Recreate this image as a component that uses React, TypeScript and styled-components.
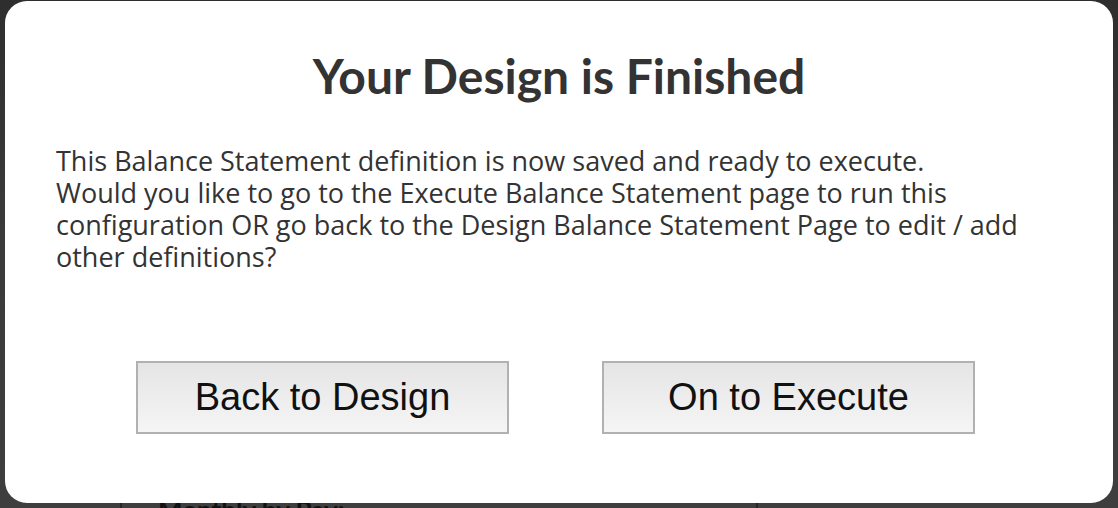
import React from "react";
import styled, { createGlobalStyle } from "styled-components";

const GlobalStyle = createGlobalStyle`
  html, body {
    margin: 0;
    padding: 0;
    width: 1118px;
    height: 508px;
    overflow: hidden;
    background: #3b3b3b;
  }
  * {
    box-sizing: border-box;
  }
`;

const Page = styled.div`
  position: relative;
  width: 1118px;
  height: 508px;
  background: linear-gradient(180deg, #2e2e2e 0%, #393939 40%, #3e3e3e 100%);
  overflow: hidden;
`;

const BehindRow = styled.div`
  display: flex;
  padding-top: 494px;
`;

const BehindCell = styled.div<{ $width: number }>`
  width: ${(p) => p.$width}px;
  height: 40px;
  padding-left: ${(p) => (p.$width > 400 ? 36 : 0)}px;
  border-right: 2px solid #262626;
  font-family: "Lato", "Liberation Sans", sans-serif;
  font-weight: 700;
  font-size: 26px;
  color: #111;
`;

const Modal = styled.div`
  position: absolute;
  top: 1px;
  left: 5px;
  width: 1108px;
  height: 502px;
  background: #fff;
  border-radius: 22px;
  display: flex;
  flex-direction: column;
  padding: 48px 51px 0;
`;

const Title = styled.h1`
  margin: 0;
  text-align: center;
  font-family: "Lato", "Liberation Sans", sans-serif;
  font-weight: 700;
  font-size: 48px;
  line-height: 54px;
  color: #333;
`;

const Message = styled.p`
  margin: 42px 0 0;
  font-family: "Open Sans", "Liberation Sans", sans-serif;
  font-size: 27px;
  line-height: 32px;
  color: #333;
`;

const Actions = styled.div`
  display: flex;
  justify-content: center;
  gap: 93px;
  margin-top: 88px;
  padding-right: 7px;
`;

const Button = styled.button`
  width: 373px;
  height: 73px;
  border: 2px solid #b1b1b1;
  border-radius: 0;
  background: linear-gradient(180deg, #e5e5e5 0%, #f5f5f5 100%);
  font-family: "Liberation Sans", Arial, sans-serif;
  font-size: 38px;
  color: #111;
  padding: 0;
  cursor: pointer;
`;

export default function App() {
  return (
    <Page>
      <GlobalStyle />
      <BehindRow>
        <BehindCell $width={122}></BehindCell>
        <BehindCell $width={636}>Monthly by Pay:</BehindCell>
      </BehindRow>
      <Modal>
        <Title>Your Design is Finished</Title>
        <Message>
          This Balance Statement definition is now saved and ready to execute.
          <br />
          Would you like to go to the Execute Balance Statement page to run this
          configuration OR go back to the Design Balance Statement Page to edit /
          add other definitions?
        </Message>
        <Actions>
          <Button>Back to Design</Button>
          <Button>On to Execute</Button>
        </Actions>
      </Modal>
    </Page>
  );
}
